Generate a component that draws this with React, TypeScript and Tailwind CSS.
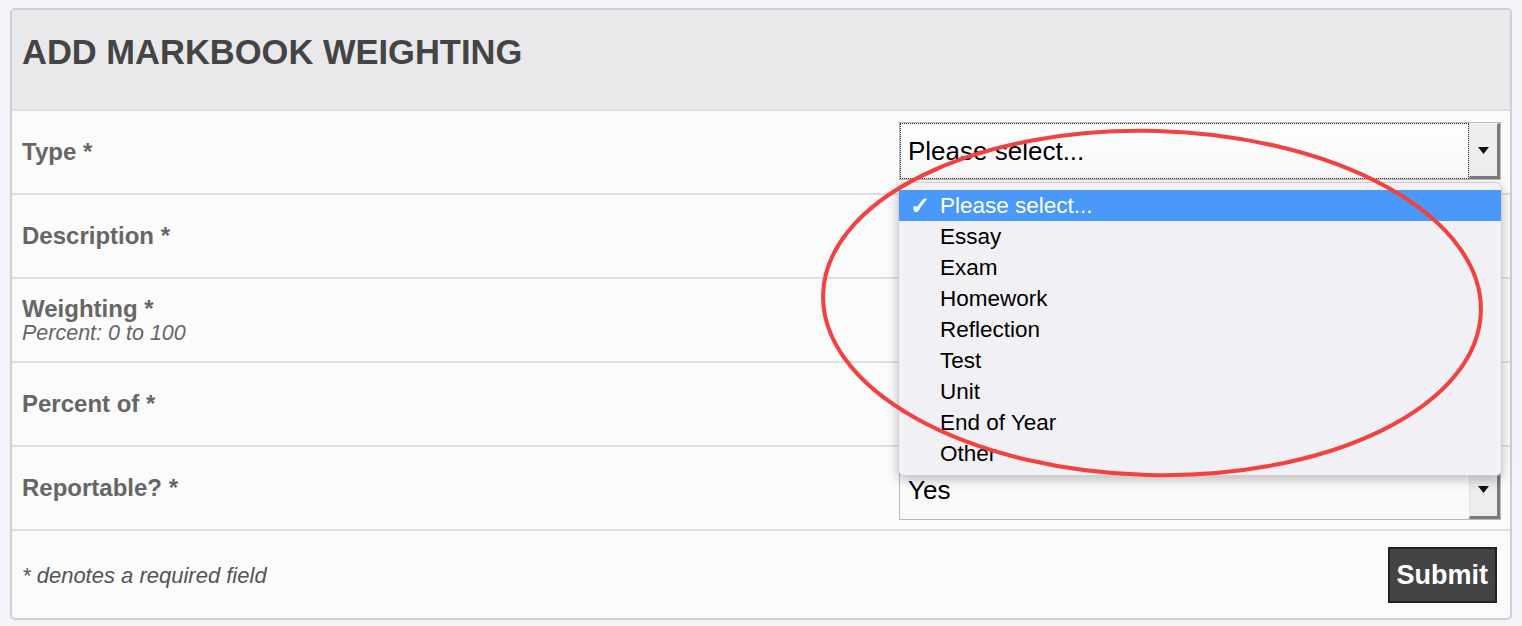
import React from 'react';

const options = ['Please select...', 'Essay', 'Exam', 'Homework', 'Reflection', 'Test', 'Unit', 'End of Year', 'Other'];

const font = { fontFamily: '"Liberation Sans", Arial, sans-serif' };

const Arrow = () => (
  <div className="w-[31px] h-full bg-[#ededed] border-r-[3px] border-b-[3px] border-r-[#7a7a7a] border-b-[#7a7a7a] border-l border-t border-l-[#e2e2e2] border-t-[#f6f6f6] flex items-center justify-center">
    <svg width="11" height="7" viewBox="0 0 11 7">
      <path d="M0 0 H11 L5.5 7 Z" fill="#111" />
    </svg>
  </div>
);

const SelectBox = ({ value, focused }: { value: string; focused?: boolean }) => (
  <div className="h-[58px] w-[602px] border border-[#b9b9b9] bg-white flex">
    <div className={`flex-1 flex items-center pl-[8px] text-[26px] text-black bg-gradient-to-b from-white to-[#f7f7f7] ${focused ? 'outline-1 outline-dotted outline-[#222] -outline-offset-1' : ''}`}>
      {value}
    </div>
    <Arrow />
  </div>
);

const Row = ({ label, sub, children }: { label: string; sub?: string; children?: React.ReactNode }) => (
  <div className="h-[84px] border-b-2 border-[#dedede] flex items-center justify-between pl-[10px] pr-[9px]">
    <div className="text-[#666]">
      <div className="text-[24px] font-bold leading-[26px]">{label}</div>
      {sub && <div className="text-[21.5px] italic leading-[22px]">{sub}</div>}
    </div>
    {children}
  </div>
);

const App = () => {
  return (
    <div className="relative min-h-[626px] bg-[#f3f3fa] pt-[8px] px-[10px]" style={font}>
      <div className="border-2 border-[#cfcfcf] rounded-[5px] bg-[#fbfbfb]">
        <div className="h-[101px] bg-[#e9e9eb] border-b-2 border-[#dedede] flex items-center pl-[10px]">
          <h1 className="text-[34.5px] font-bold text-[#444] -mt-[14px]">ADD MARKBOOK WEIGHTING</h1>
        </div>

        <Row label="Type *">
          <div className="relative -mt-[2px]">
            <SelectBox value="Please select..." focused />
            <div className="absolute z-10 top-[60px] -left-px w-[604px] h-[294px] rounded-[6px] bg-[#f1f0f4] border border-[#d0d0d4] shadow-[0_4px_12px_rgba(0,0,0,0.25)] pt-[7px]">
              {options.map((o, i) => (
                <div
                  key={o}
                  className={`h-[31px] flex items-center text-[22.5px] ${i === 0 ? 'bg-[#4a98f7] text-white' : 'text-black'}`}
                >
                  <span className="w-[41px] pl-[11px] text-[24px] font-bold">{i === 0 ? '✓' : ''}</span>
                  <span>{o}</span>
                </div>
              ))}
            </div>
          </div>
        </Row>
        <Row label="Description *">
          <div className="h-[57px] w-[602px] border border-[#b9b9b9] bg-white" />
        </Row>
        <Row label="Weighting *" sub="Percent: 0 to 100">
          <div className="h-[57px] w-[602px] border border-[#b9b9b9] bg-white" />
        </Row>
        <Row label="Percent of *">
          <SelectBox value="" />
        </Row>
        <Row label="Reportable? *">
          <div className="mt-[5px]">
            <SelectBox value="Yes" />
          </div>
        </Row>

        <div className="h-[87px] flex items-center justify-between pl-[10px] pr-[13px]">
          <div className="text-[22px] italic text-[#555] mt-[1px]">* denotes a required field</div>
          <button className="h-[56px] px-[7px] mt-[1px] bg-[#444] border-2 border-[#222] text-white text-[27px] font-bold">Submit</button>
        </div>
      </div>

      <svg className="absolute inset-0 pointer-events-none z-20" width="1522" height="626">
        <ellipse cx="1152" cy="303" rx="329" ry="172" fill="none" stroke="#f2413f" strokeWidth="4" transform="rotate(1.5 1152 303)" />
      </svg>
    </div>
  );
};

export default App;
